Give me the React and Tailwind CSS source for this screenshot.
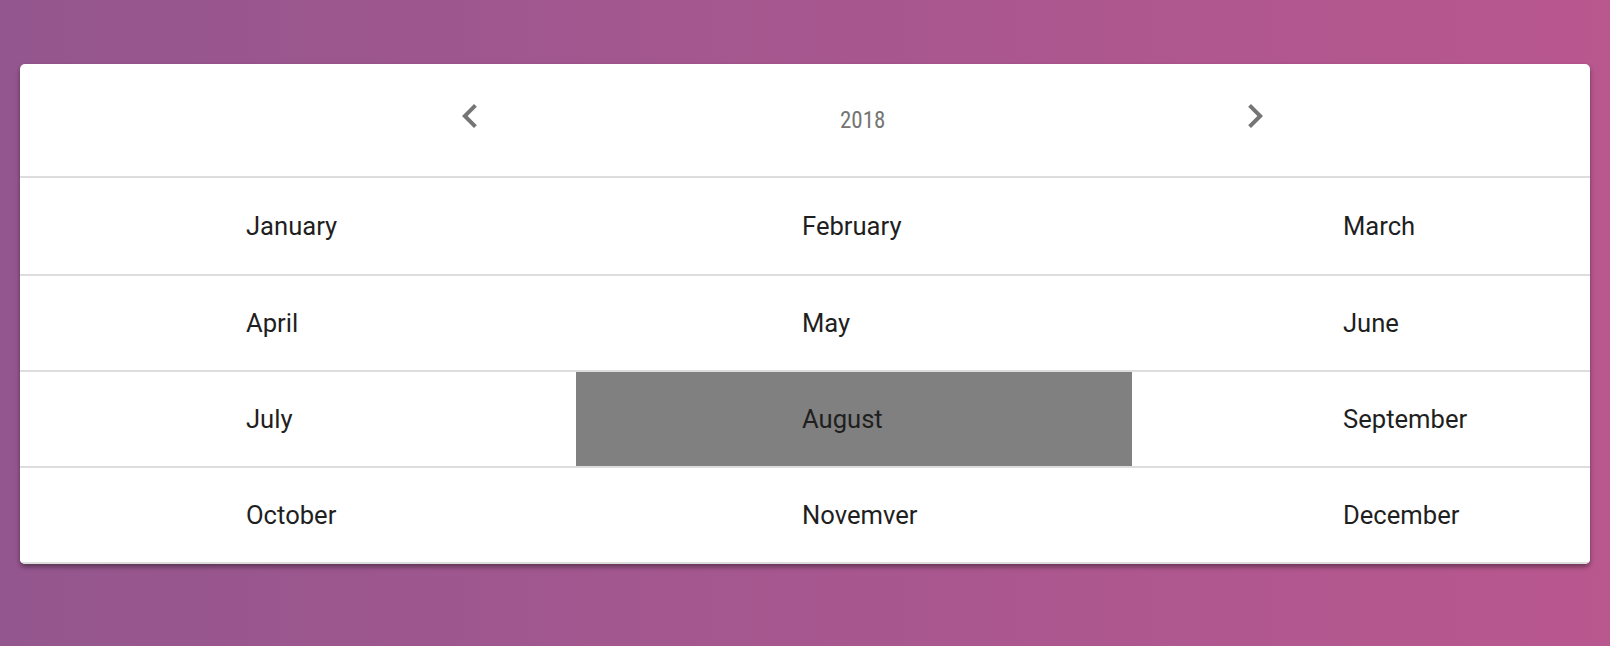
import { useState } from 'react';

const months = [
  ['January', 'February', 'March'],
  ['April', 'May', 'June'],
  ['July', 'August', 'September'],
  ['October', 'Novemver', 'December'],
];

const ChevronLeft = () => (
  <svg width="48" height="48" viewBox="0 0 24 24" fill="#757575">
    <path d="M15.41 7.41L14 6l-6 6 6 6 1.41-1.41L10.83 12z" />
  </svg>
);

const ChevronRight = () => (
  <svg width="48" height="48" viewBox="0 0 24 24" fill="#757575">
    <path d="M10 6L8.59 7.41 13.17 12l-4.58 4.59L10 18l6-6z" />
  </svg>
);

const App = () => {
  const [year, setYear] = useState(2018);
  const [selected, setSelected] = useState('August');

  return (
    <div className="min-h-screen w-full bg-gradient-to-r from-[#94568e] to-[#b9578f] pt-[64px] pl-[20px]">
      <div className="w-[1570px] overflow-hidden rounded-[5px] bg-white shadow-[0_3px_5px_rgba(0,0,0,0.4)]">
        <div className="flex h-[112px] items-center pl-[426px] pb-[8px]">
          <button onClick={() => setYear(year - 1)} className="h-[48px] w-[48px]"><ChevronLeft /></button>
          <span
            className="ml-[346px] mt-[10px] text-[23px] text-[#757575]"
            style={{ fontFamily: '"Liberation Sans Narrow", "Roboto Condensed", "Liberation Sans", sans-serif' }}
          >
            {year}
          </span>
          <button onClick={() => setYear(year + 1)} className="ml-[346px] h-[48px] w-[48px]"><ChevronRight /></button>
        </div>
        {months.map((row, i) => (
          <div
            key={i}
            className={`grid grid-cols-[556px_556px_1fr] border-t-2 border-[#dddddd] ${i === 0 ? 'h-[98px]' : i === 3 ? 'h-[98px] border-b-2' : 'h-[96px]'}`}
          >
            {row.map((name, j) => (
              <button
                key={name}
                onClick={() => setSelected(name)}
                className={`flex items-center text-left text-[25.6px] text-[#1f1f1f] ${j === 2 ? 'pl-[211px]' : 'pl-[226px]'} ${selected === name ? 'bg-[#808080]' : 'bg-white'}`}
                style={{ fontFamily: 'Roboto, "Liberation Sans", sans-serif' }}
              >
                {name}
              </button>
            ))}
          </div>
        ))}
      </div>
    </div>
  );
};

export default App;
